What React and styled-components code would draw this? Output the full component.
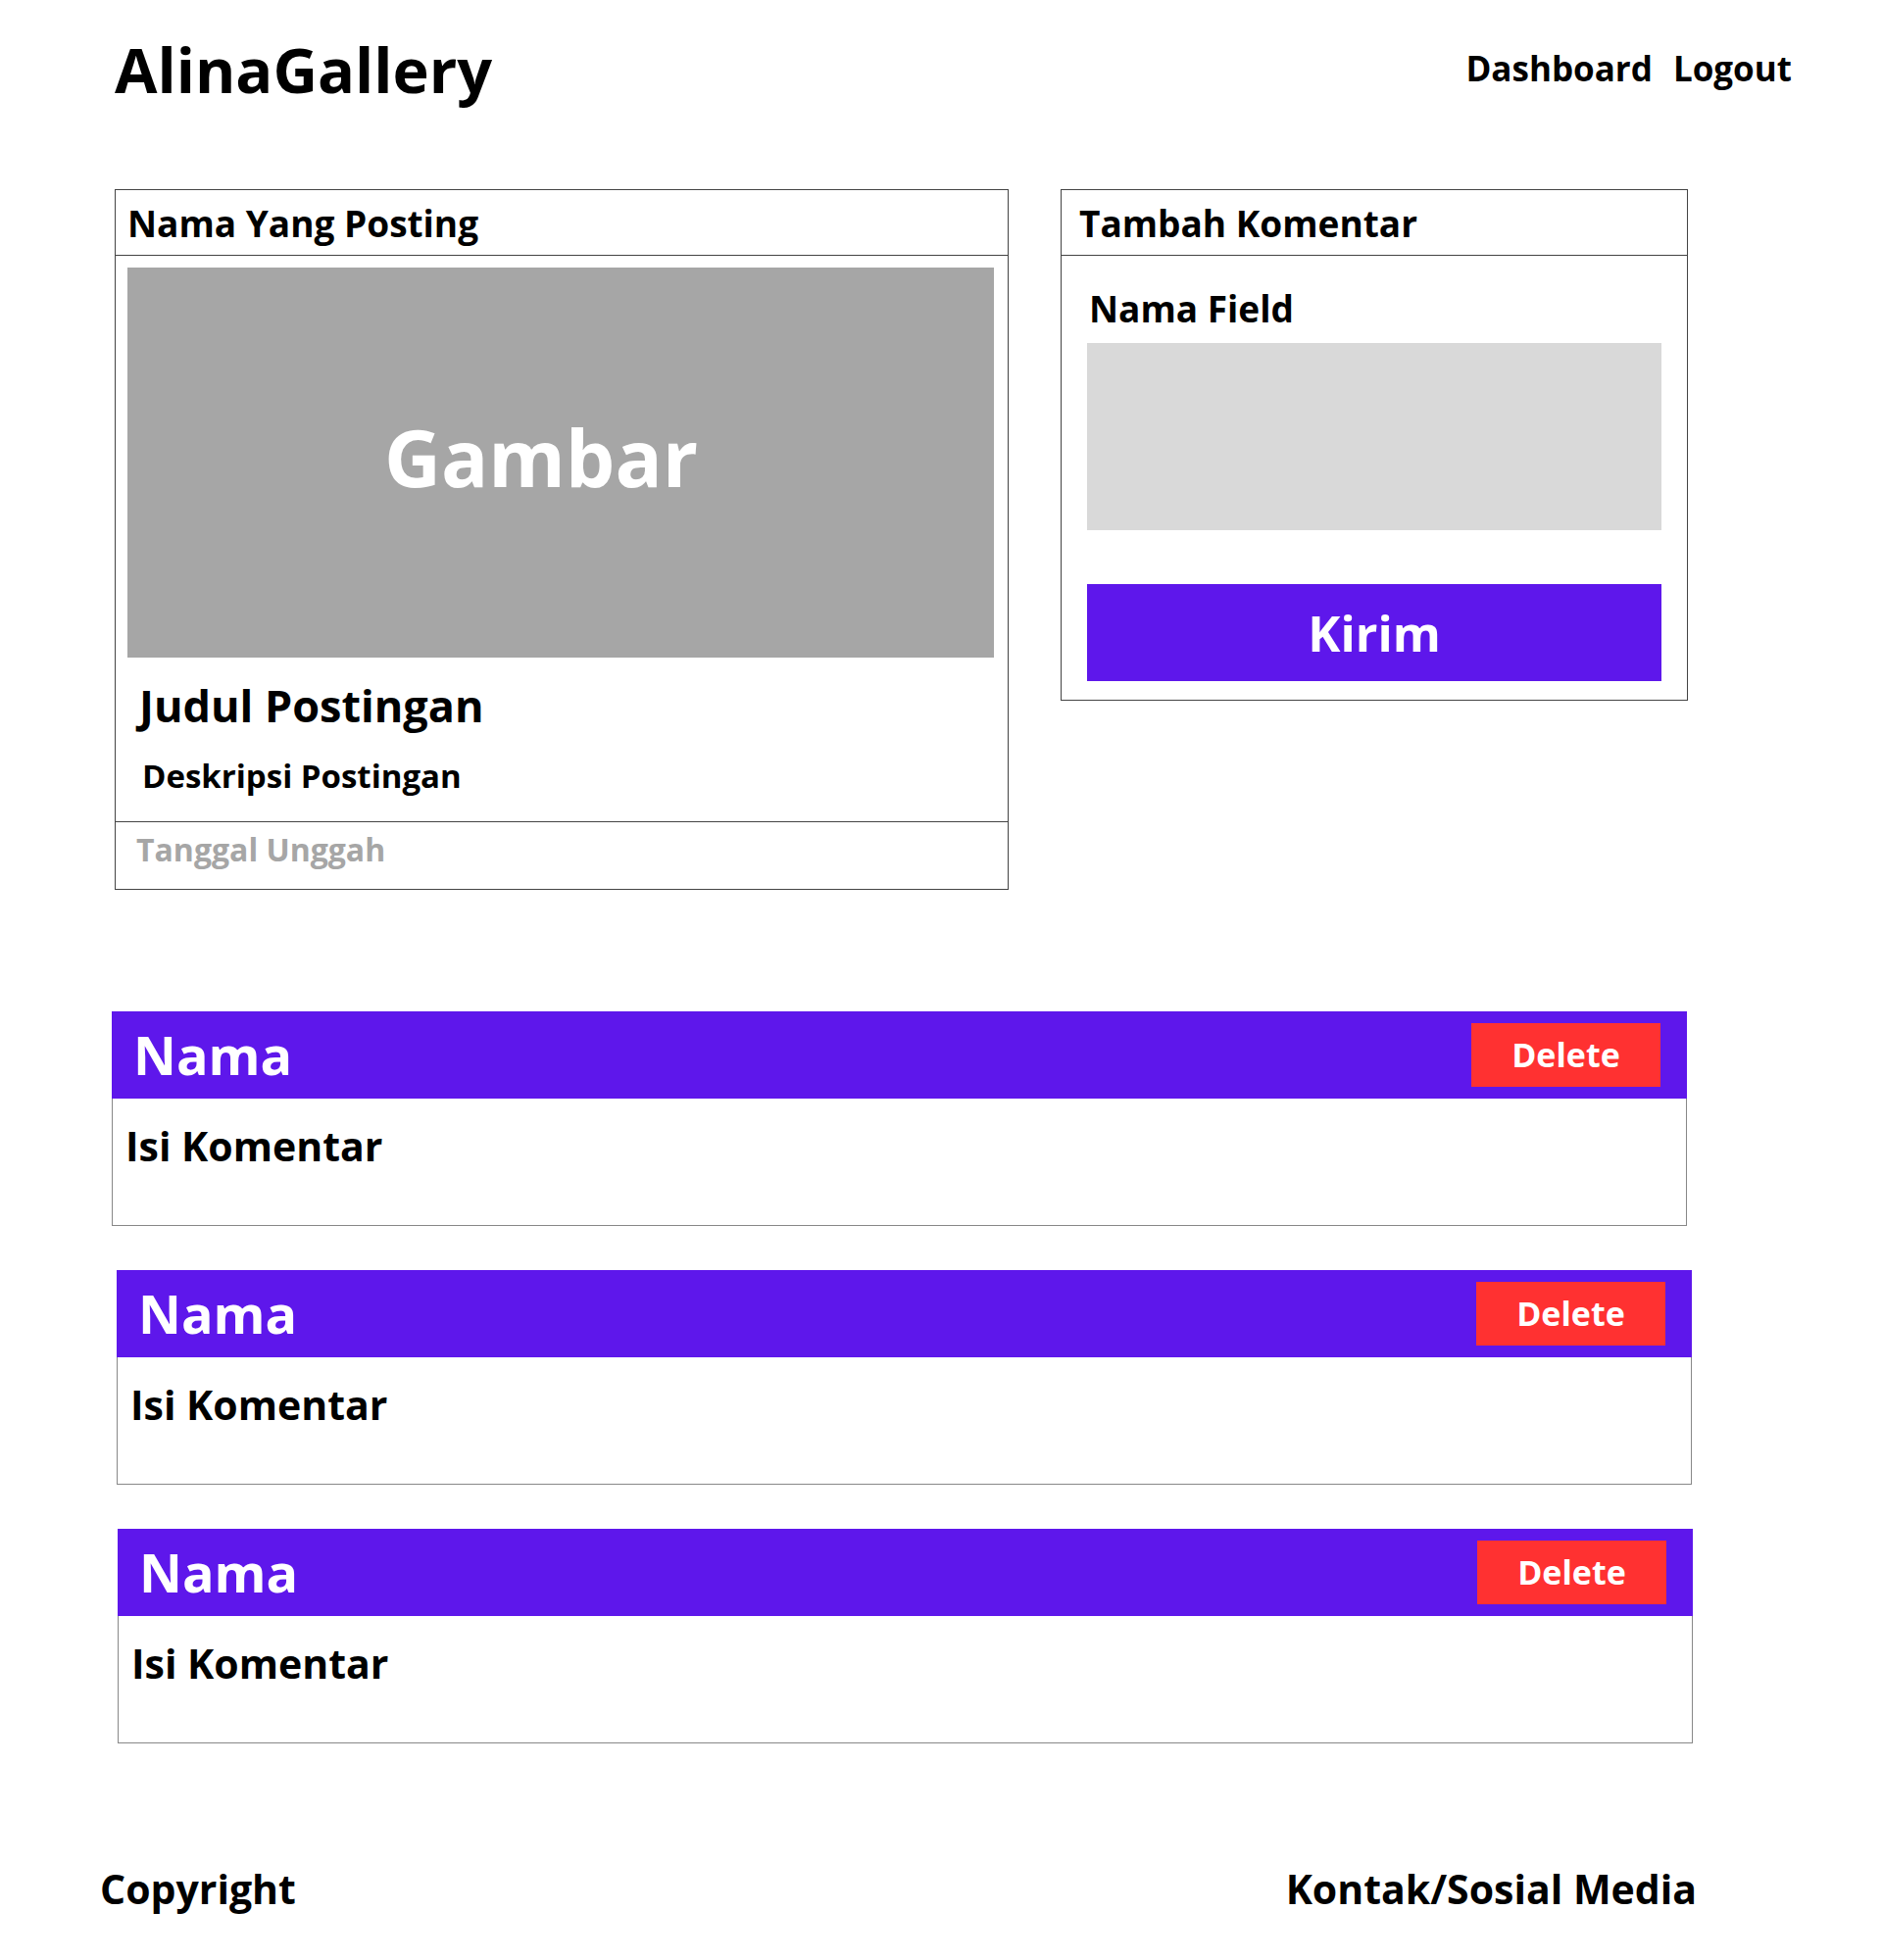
import React from 'react';
import styled, { createGlobalStyle } from 'styled-components';

const GlobalStyle = createGlobalStyle`
  body {
    margin: 0;
    background: #ffffff;
    font-family: "Open Sans", "Noto Sans", sans-serif;
    color: #000000;
  }
`;

const Page = styled.div`
  width: 1920px;
  min-height: 2000px;
  box-sizing: border-box;
  padding: 0 92px 0 102px;
  display: flex;
  flex-direction: column;
`;

const TopBar = styled.header`
  display: flex;
  justify-content: space-between;
  align-items: center;
  height: 140px;
  padding-left: 15px;
`;

const Logo = styled.h1`
  margin: 0;
  font-size: 63px;
  font-weight: 700;
  line-height: 1;
`;

const Nav = styled.nav`
  display: flex;
  gap: 21px;
  margin-bottom: 2px;
`;

const NavLink = styled.a`
  font-size: 35px;
  font-weight: 700;
  color: #000;
  text-decoration: none;
`;

const Main = styled.section`
  display: flex;
  align-items: flex-start;
  gap: 53px;
  margin-top: 53px;
  padding-left: 15px;
`;

const Card = styled.div`
  width: ${p => p.width}px;
  box-sizing: border-box;
  border: 1.5px solid #444;
  background: #fff;
`;

const CardHeader = styled.div`
  height: 67px;
  box-sizing: border-box;
  border-bottom: 1.5px solid #444;
  display: flex;
  align-items: center;
  padding-left: ${p => p.pad || 12}px;
  font-size: 37px;
  font-weight: 700;
`;

const ImageBox = styled.div`
  margin: 12px 14px 0 12px;
  height: 398px;
  background: #a6a6a6;
  display: flex;
  align-items: center;
  justify-content: center;
  color: #fff;
  font-size: 80px;
  font-weight: 700;
  padding: 0 40px 14px 0;
  box-sizing: border-box;
`;

const PostTitle = styled.h2`
  margin: 22px 0 0 24px;
  font-size: 45px;
  font-weight: 700;
  line-height: 1.2;
`;

const PostDesc = styled.p`
  margin: 24px 0 24px 27px;
  font-size: 33px;
  font-weight: 700;
  line-height: 1.3;
`;

const CardFooter = styled.div`
  border-top: 1.5px solid #444;
  height: 69px;
  box-sizing: border-box;
  padding: 6px 0 0 21px;
  font-size: 32px;
  font-weight: 700;
  color: #a6a6a6;
`;

const FormBody = styled.div`
  padding: 30px 26px 19px 26px;
  display: flex;
  flex-direction: column;
`;

const FieldLabel = styled.label`
  font-size: 37px;
  font-weight: 700;
  margin-left: 2px;
  line-height: 1.3;
`;

const FieldInput = styled.div`
  margin-top: 11px;
  height: 191px;
  background: #d9d9d9;
`;

const SubmitButton = styled.button`
  margin-top: 55px;
  height: 99px;
  border: none;
  background: #5e17eb;
  color: #fff;
  font-family: inherit;
  font-size: 50px;
  font-weight: 700;
`;

const CommentList = styled.section`
  display: flex;
  flex-direction: column;
  gap: 45px;
  margin-top: 124px;
`;

const Comment = styled.article`
  width: 1607px;
  margin-left: ${p => p.shift}px;
  box-sizing: border-box;
  border: 1px solid #888;
  border-top: none;
`;

const CommentHead = styled.div`
  height: 89px;
  background: #5e17eb;
  display: flex;
  align-items: center;
  justify-content: space-between;
  padding: 0 27px 0 22px;
  margin: 0 -1px;
`;

const CommentName = styled.span`
  color: #fff;
  font-size: 54px;
  font-weight: 700;
`;

const DeleteButton = styled.button`
  width: 193px;
  height: 65px;
  border: none;
  background: #ff3131;
  color: #fff;
  font-family: inherit;
  font-size: 34px;
  font-weight: 700;
`;

const CommentBody = styled.p`
  margin: 0;
  height: 129px;
  box-sizing: border-box;
  padding: 20px 0 0 13px;
  font-size: 41px;
  font-weight: 700;
`;

const Footer = styled.footer`
  display: flex;
  justify-content: space-between;
  margin-top: 120px;
  width: 1629px;
`;

const FooterText = styled.span`
  font-size: 41px;
  font-weight: 700;
`;

const comments = [
  { id: 1, shift: 12 },
  { id: 2, shift: 17 },
  { id: 3, shift: 18 },
];

export default function App() {
  return (
    <>
      <GlobalStyle />
      <Page>
        <TopBar>
          <Logo>AlinaGallery</Logo>
          <Nav>
            <NavLink href="#">Dashboard</NavLink>
            <NavLink href="#">Logout</NavLink>
          </Nav>
        </TopBar>

        <Main>
          <Card width={912}>
            <CardHeader>Nama Yang Posting</CardHeader>
            <ImageBox>Gambar</ImageBox>
            <PostTitle>Judul Postingan</PostTitle>
            <PostDesc>Deskripsi Postingan</PostDesc>
            <CardFooter>Tanggal Unggah</CardFooter>
          </Card>

          <Card width={640}>
            <CardHeader pad={18}>Tambah Komentar</CardHeader>
            <FormBody>
              <FieldLabel>Nama Field</FieldLabel>
              <FieldInput />
              <SubmitButton>Kirim</SubmitButton>
            </FormBody>
          </Card>
        </Main>

        <CommentList>
          {comments.map(c => (
            <Comment key={c.id} shift={c.shift}>
              <CommentHead>
                <CommentName>Nama</CommentName>
                <DeleteButton>Delete</DeleteButton>
              </CommentHead>
              <CommentBody>Isi Komentar</CommentBody>
            </Comment>
          ))}
        </CommentList>

        <Footer>
          <FooterText>Copyright</FooterText>
          <FooterText>Kontak/Sosial Media</FooterText>
        </Footer>
      </Page>
    </>
  );
}
